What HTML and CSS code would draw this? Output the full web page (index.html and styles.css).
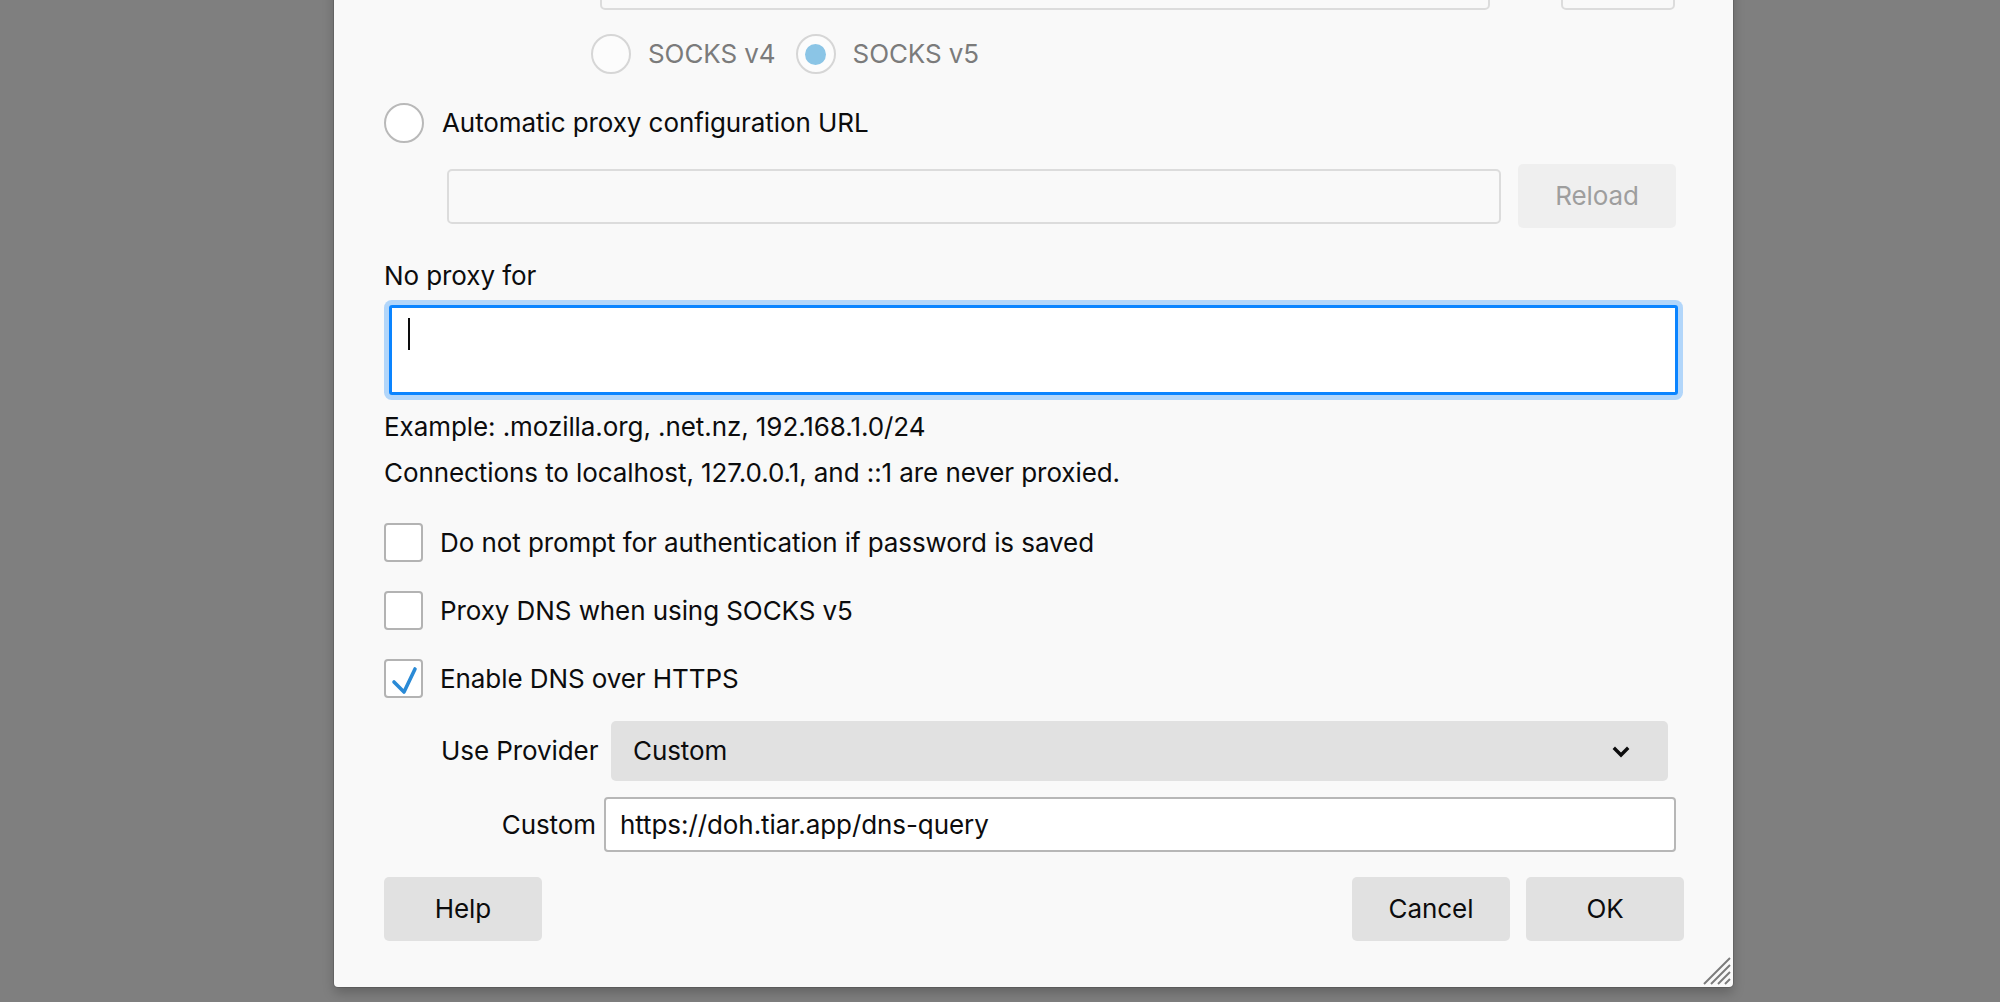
FILE: index.html
```html
<!DOCTYPE html>
<html lang="en">
<head>
<meta charset="utf-8">
<title>Connection Settings</title>
<link rel="stylesheet" href="styles.css">
</head>
<body>
<div class="dialog">
  <div class="row host-row">
    <div class="field host"></div>
    <div class="field port"></div>
  </div>

  <div class="row socks-row">
    <span class="radio disabled"></span><span class="lbl dim first">SOCKS v4</span>
    <span class="radio disabled checked"><span class="dot"></span></span><span class="lbl dim">SOCKS v5</span>
  </div>

  <div class="row auto-row">
    <span class="radio"></span><span class="lbl">Automatic proxy configuration URL</span>
  </div>

  <div class="row pac-row">
    <div class="field pac"></div>
    <div class="btn reload">Reload</div>
  </div>

  <div class="text np-label">No proxy for</div>
  <div class="noproxy"><span class="caret"></span></div>
  <div class="text example">Example: .mozilla.org, .net.nz, 192.168.1.0/24</div>
  <div class="text conn">Connections to localhost, 127.0.0.1, and ::1 are never proxied.</div>

  <div class="checks">
    <div class="check-row"><span class="checkbox"></span><span class="lbl">Do not prompt for authentication if password is saved</span></div>
    <div class="check-row"><span class="checkbox"></span><span class="lbl">Proxy DNS when using SOCKS v5</span></div>
    <div class="check-row"><span class="checkbox"><svg class="tick" viewBox="0 0 39 39" width="39" height="39"><polyline points="10,23 20,33 31,10" fill="none" stroke="#2a8ad6" stroke-width="3.6" stroke-linecap="round" stroke-linejoin="round"/></svg></span><span class="lbl">Enable DNS over HTTPS</span></div>
  </div>

  <div class="doh">
    <span class="glabel">Use Provider</span>
    <div class="select"><span>Custom</span><svg class="chev" viewBox="0 0 18 12" width="18" height="12"><polyline points="3,3 9,9 15,3" fill="none" stroke="#0c0c0d" stroke-width="3.4" stroke-linecap="square"/></svg></div>
    <span class="glabel">Custom</span>
    <div class="url">https://doh.tiar.app/dns-query</div>
  </div>

  <div class="buttons">
    <div class="btn">Help</div>
    <div class="spacer"></div>
    <div class="btn">Cancel</div>
    <div class="btn">OK</div>
  </div>

  <svg class="grip" viewBox="0 0 28 28" width="28" height="28">
    <g stroke="#7b7b7b" stroke-width="2">
      <line x1="1" y1="27" x2="27" y2="1"/>
      <line x1="8" y1="27" x2="27" y2="8"/>
      <line x1="15" y1="27" x2="27" y2="15"/>
      <line x1="22" y1="27" x2="27" y2="22"/>
    </g>
  </svg>
</div>
</body>
</html>
```

FILE: styles.css
```css
html, body {
  margin: 0;
  padding: 0;
  height: 100%;
  overflow: hidden;
}

body {
  background: #7f7f7f;
  font-family: "Inter", "Liberation Sans", sans-serif;
  font-size: 26px;
  line-height: 32px;
  letter-spacing: -0.08px;
  color: #0c0c0d;
}

.dialog {
  position: relative;
  box-sizing: border-box;
  width: 1399px;
  margin: -60px 0 0 334px;
  padding: 12px 49px 46px 50px;
  background: #f9f9f9;
  border-radius: 0 0 4px 4px;
  box-shadow: 0 0 0 1px rgba(0, 0, 0, 0.12), 0 6px 12px rgba(0, 0, 0, 0.22);
}

.row {
  display: flex;
  align-items: center;
}

/* host row (mostly scrolled out of view) */
.host-row {
  height: 58px;
  padding-left: 216px;
}

.field {
  box-sizing: border-box;
  border: 2px solid #dcdcdc;
  border-radius: 5px;
  background: #f9f9f9;
}

.host {
  width: 890px;
  height: 58px;
}

.port {
  width: 114px;
  height: 58px;
  margin-left: 71px;
}

/* radios */
.radio {
  box-sizing: border-box;
  width: 40px;
  height: 40px;
  flex: none;
  border: 2px solid #b9b9b9;
  border-radius: 50%;
  background: #ffffff;
  display: flex;
  align-items: center;
  justify-content: center;
}

.radio.disabled {
  border-color: #d6d6d6;
  background: #fcfcfc;
}

.radio .dot {
  width: 21px;
  height: 21px;
  border-radius: 50%;
  background: #8bc5e6;
}

.socks-row {
  height: 40px;
  margin-top: 24px;
  padding-left: 207px;
}

.lbl {
  margin-left: 17px;
  white-space: nowrap;
}

.lbl.dim {
  color: #7b7b7b;
}

.lbl.first {
  margin-right: 20px;
}

.auto-row {
  height: 40px;
  margin-top: 29px;
}

.auto-row .lbl {
  margin-left: 18px;
}

/* PAC */
.pac-row {
  height: 64px;
  margin-top: 21px;
  padding-left: 63px;
}

.pac {
  width: 1054px;
  height: 55px;
}

.btn {
  box-sizing: border-box;
  width: 158px;
  height: 64px;
  border-radius: 5px;
  background: #e1e1e1;
  display: flex;
  align-items: center;
  justify-content: center;
  flex: none;
}

.btn.reload {
  margin-left: 17px;
  background: #efefef;
  color: #9e9e9e;
}

/* no proxy */
.np-label {
  margin-top: 32px;
}

.noproxy {
  box-sizing: border-box;
  width: 1289px;
  height: 90px;
  margin: 13px 0 0 5px;
  padding: 10px 16px;
  border: 3px solid #0a84ff;
  border-radius: 3px;
  background: #ffffff;
  box-shadow: 0 0 0 5px #b2d6fa;
}

.caret {
  display: block;
  width: 2px;
  height: 32px;
  background: #0c0c0d;
}

.example {
  margin-top: 16px;
}

.conn {
  margin-top: 14px;
}

/* checkboxes */
.checks {
  margin-top: 34px;
  display: flex;
  flex-direction: column;
  gap: 29px;
}

.check-row {
  display: flex;
  align-items: center;
  height: 39px;
}

.checkbox {
  box-sizing: border-box;
  width: 39px;
  height: 39px;
  flex: none;
  border: 2px solid #b3b3b3;
  border-radius: 4px;
  background: #ffffff;
  position: relative;
}

.tick {
  position: absolute;
  left: -2px;
  top: -2px;
}

/* DoH */
.doh {
  display: grid;
  grid-template-columns: 155px 1fr;
  column-gap: 8px;
  row-gap: 16px;
  margin: 23px 0 0 57px;
  align-items: center;
}

.glabel {
  text-align: right;
  white-space: nowrap;
}

.select {
  box-sizing: border-box;
  height: 60px;
  margin: 0 16px 0 7px;
  padding: 0 38px 0 22px;
  border-radius: 5px;
  background: #e1e1e1;
  display: flex;
  align-items: center;
  justify-content: space-between;
}

.chev {
  display: block;
  margin-top: 2px;
}

.url {
  box-sizing: border-box;
  height: 55px;
  margin-right: 8px;
  padding: 0 14px;
  border: 2px solid #b7b7b7;
  border-radius: 4px;
  background: #ffffff;
  display: flex;
  align-items: center;
}

/* buttons */
.buttons {
  display: flex;
  gap: 16px;
  margin-top: 25px;
}

.spacer {
  flex: 1;
}

.grip {
  position: absolute;
  right: 2px;
  bottom: 2px;
}
```
